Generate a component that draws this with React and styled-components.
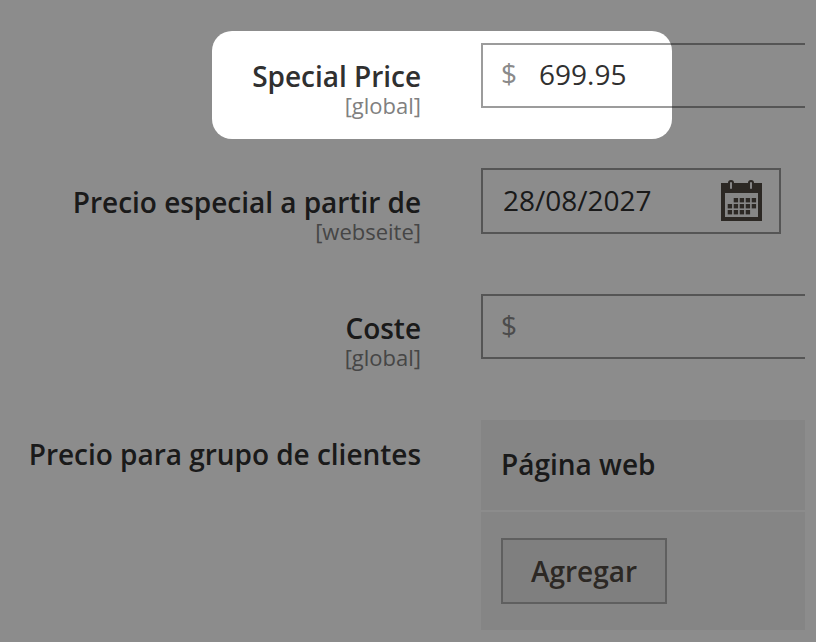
import React from "react";
import styled, { createGlobalStyle } from "styled-components";

const GlobalStyle = createGlobalStyle`
  html, body {
    margin: 0;
    height: 100%;
    background: #fff;
    overflow: hidden;
  }
  body {
    font-family: "Open Sans", "Liberation Sans", sans-serif;
    color: #303030;
  }
`;

const Page = styled.div`
  position: relative;
  width: 816px;
  height: 642px;
  overflow: hidden;
  padding-top: 42.6px;
  box-sizing: border-box;
`;

const Spotlight = styled.div`
  position: absolute;
  left: 212px;
  top: 31px;
  width: 460px;
  height: 108px;
  border-radius: 20px;
  box-shadow: 0 0 0 1000px rgba(0, 0, 0, 0.45);
  pointer-events: none;
`;

const Row = styled.div`
  display: grid;
  grid-template-columns: 421px 324px;
  column-gap: 60px;
  margin-bottom: 60.4px;
`;

const Label = styled.div`
  text-align: right;
  padding-top: 15.85px;
  margin-bottom: -13px;
`;

const LabelText = styled.div`
  font-size: 28px;
  font-weight: 600;
  line-height: 36px;
  letter-spacing: -0.03px;
`;

const Scope = styled.div`
  font-size: 22px;
  line-height: 22px;
  color: #808080;
`;

const Field = styled.div`
  display: flex;
  align-items: center;
  box-sizing: border-box;
  height: 65.3px;
  width: ${(p) => (p.$short ? "300px" : "324px")};
  border: 2px solid #9c9c9c;
  border-right: ${(p) => (p.$short ? "2px solid #9c9c9c" : "none")};
  padding: 0 0 2px 20px;
  font-size: 28px;
  color: #303030;
`;

const Addon = styled.span`
  width: 36px;
  margin-left: -2px;
  margin-right: 2px;
  padding-bottom: 2px;
  color: #8a8a8a;
  font-size: 28px;
`;

const CalendarIcon = styled.svg`
  margin-left: auto;
  margin-right: 17px;
  width: 41px;
  height: 42px;
  flex: none;
`;

const PriceTable = styled.div`
  background: #f2f2f2;
  width: 324px;
`;

const TableHead = styled.div`
  box-sizing: border-box;
  height: 92px;
  padding: 0 20px 2px;
  display: flex;
  align-items: center;
  border-bottom: 2px solid #fff;
  font-size: 28px;
  font-weight: 600;
`;

const TableBody = styled.div`
  height: 118px;
  padding: 26px 20px 0;
  box-sizing: border-box;
`;

const AddButton = styled.button`
  box-sizing: border-box;
  width: 166px;
  height: 66px;
  background: #e8e8e8;
  border: 2px solid #adadad;
  padding: 0;
  color: #514943;
  font-family: inherit;
  font-size: 28px;
  font-weight: 600;
`;

const cells = [
  [12.7, 19], [18.7, 19], [24.7, 19], [30.7, 19],
  [6.7, 25], [12.7, 25], [18.7, 25], [24.7, 25], [30.7, 25],
  [6.7, 31], [12.7, 31], [18.7, 31], [24.7, 31],
];

const Calendar = () => (
  <CalendarIcon viewBox="0 0 41 42">
    <rect x="0" y="4" width="41" height="38" fill="#514943" />
    <rect x="4" y="14" width="33" height="24" fill="#f5f5f5" />
    <g fill="none" strokeLinecap="round">
      <path d="M10 9V4" stroke="#514943" strokeWidth="6" />
      <path d="M30 9V4" stroke="#514943" strokeWidth="6" />
      <path d="M10 9V4" stroke="#f5f5f5" strokeWidth="2" />
      <path d="M30 9V4" stroke="#f5f5f5" strokeWidth="2" />
    </g>
    <g fill="#514943">
      {cells.map(([x, y]) => (
        <rect key={`${x}-${y}`} x={x} y={y} width="4.4" height="4.4" />
      ))}
    </g>
  </CalendarIcon>
);

export default function App() {
  return (
    <>
      <GlobalStyle />
      <Page>
        <Row>
          <Label>
            <LabelText>Special Price</LabelText>
            <Scope>[global]</Scope>
          </Label>
          <Field>
            <Addon>$</Addon>
            699.95
          </Field>
        </Row>
        <Row>
          <Label>
            <LabelText>Precio especial a partir de</LabelText>
            <Scope>[webseite]</Scope>
          </Label>
          <Field $short>
            28/08/2027
            <Calendar />
          </Field>
        </Row>
        <Row>
          <Label>
            <LabelText>Coste</LabelText>
            <Scope>[global]</Scope>
          </Label>
          <Field>
            <Addon>$</Addon>
          </Field>
        </Row>
        <Row>
          <Label>
            <LabelText>Precio para grupo de clientes</LabelText>
          </Label>
          <PriceTable>
            <TableHead>Página web</TableHead>
            <TableBody>
              <AddButton>Agregar</AddButton>
            </TableBody>
          </PriceTable>
        </Row>
        <Spotlight />
      </Page>
    </>
  );
}
